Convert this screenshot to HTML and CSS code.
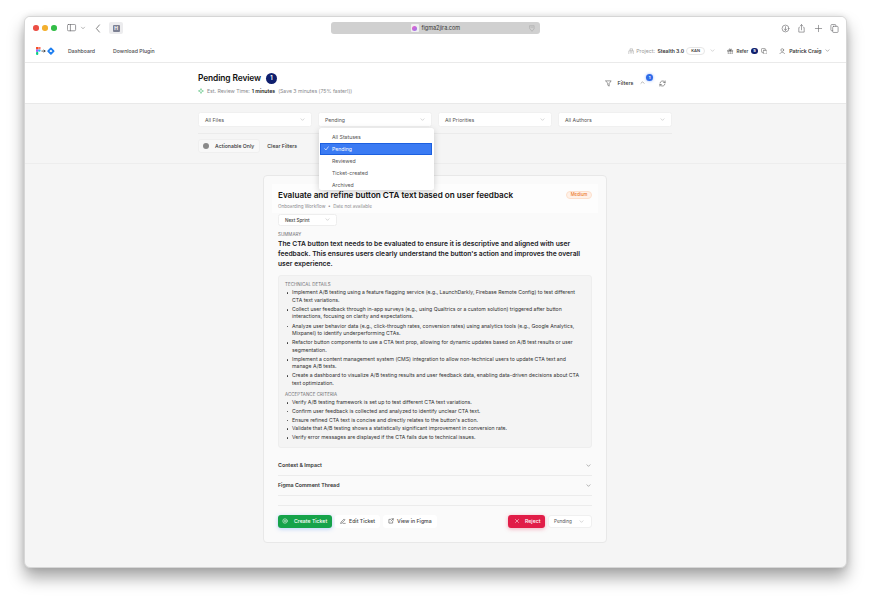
FILE: index.html
```html
<!DOCTYPE html>
<html lang="en">
<head>
<meta charset="utf-8">
<title>Pending Review</title>
<link rel="stylesheet" href="styles.css">
</head>
<body>
<div class="window">
  <div class="chrome">
    <div class="chrome-left">
      <span class="light red"></span><span class="light yellow"></span><span class="light green"></span>
      <svg class="ci sidebar-ic" viewBox="0 0 10 8"><rect x=".4" y=".4" width="8.2" height="6.4" rx="1.2"/><path d="M3.4.4v6.4"/></svg>
      <svg class="ci caret" viewBox="0 0 6 6"><path d="M1.5 2.2 3 3.8l1.5-1.6"/></svg>
      <svg class="ci back" viewBox="0 0 6 10"><path d="M4.6 1 1.2 5l3.4 4"/></svg>
      <span class="tab-ic"><span class="tab-h">H</span></span>
    </div>
    <div class="address">
      <span class="addr-center"><span class="favicon"><span class="fav-dot"></span></span><span>figma2jira.com</span></span>
      <svg class="ci shield" viewBox="0 0 8 10"><path d="M1 1h6v4.500L4 9 1 5.500zM2.500 3h3"/></svg>
    </div>
    <div class="chrome-right">
      <svg class="ci act" viewBox="0 0 10 10"><circle cx="5" cy="5" r="3.800"/><path d="M5 3v4M3.500 5.500 5 7l1.500-1.500"/></svg>
      <svg class="ci act" viewBox="0 0 10 10"><path d="M2.500 4H2v5h6V4h-.5M5 6.500V.8M3.400 2.300 5 .8l1.600 1.500"/></svg>
      <svg class="ci act" viewBox="0 0 10 10"><path d="M5 1.500v7M1.500 5h7"/></svg>
      <svg class="ci act" viewBox="0 0 10 10"><rect x="3" y="2.600" width="6" height="6.800" rx="1"/><path d="M3 7.500H2a1 1 0 0 1-1-1V1.600a1 1 0 0 1 1-1h3.500a1 1 0 0 1 1 1v1"/></svg>
    </div>
  </div>

  <nav class="nav">
    <div class="nav-left">
      <span class="logo">
        <svg viewBox="0 0 21 10" class="logo-svg">
          <rect x="0" y="0" width="2.500" height="2.700" fill="#f24e1e"/>
          <rect x="2.500" y="0" width="2.500" height="2.700" fill="#ff7262"/>
          <rect x="0" y="2.700" width="2.500" height="2.700" fill="#a259ff"/>
          <circle cx="3.700" cy="4" r="1.300" fill="#1abcfe"/>
          <rect x="0" y="5.400" width="2.500" height="3.600" rx="1.200" fill="#0acf83"/>
          <path d="M6.500 4.500h3.500M8.800 3.400l1.300 1.100-1.300 1.100" stroke="#222" stroke-width=".8" fill="none"/>
          <path d="M16.500 1.500 19.500 4.500 16.500 7.500 13.500 4.500z" fill="none" stroke="#1f7ff0" stroke-width="2"/>
        </svg>
      </span>
      <a class="nav-link">Dashboard</a>
      <a class="nav-link">Download Plugin</a>
    </div>
    <div class="nav-right">
      <svg class="ni" viewBox="0 0 8 8"><path d="M1 7.500V3.500h1.500V1h3v2.500H7v4zM3 3h2M3 4.500h2M3 6h2"/></svg>
      <span class="proj-label">Project:</span>
      <span class="proj-name">Stealth 3.0</span>
      <span class="kan">KAN</span>
      <svg class="chev pale" viewBox="0 0 8 5"><path d="M1.500 1.200 4 3.700l2.500-2.500"/></svg>
      <span class="refer">
        <svg class="ni dark" viewBox="0 0 8 8"><path d="M1 3h6v1H1zM1.500 4v3.500h5V4M4 3v4.500M4 3C2 3 2 1 3 1s1 2 1 2 0-2 1-2 1 2-1 2"/></svg>
        <span>Refer</span>
        <span class="refer-count">5</span>
        <svg class="ni dark" viewBox="0 0 8 8"><rect x="2.800" y="2.800" width="4.600" height="4.600" rx=".8"/><path d="M2.800 5.400H1.400a.8.800 0 0 1-.8-.8V1.400a.8.800 0 0 1 .8-.8h3.200a.8.800 0 0 1 .8.800v1.400"/></svg>
      </span>
      <span class="user">
        <svg class="ni dark" viewBox="0 0 8 8"><circle cx="4" cy="2.500" r="1.700"/><path d="M1 7.500c0-3 6-3 6 0z"/></svg>
        <span>Patrick Craig</span>
        <svg class="chev" viewBox="0 0 8 5"><path d="M1.500 1.200 4 3.700l2.500-2.500"/></svg>
      </span>
    </div>
  </nav>

  <header class="page-head">
    <div class="head-inner">
      <div>
        <div class="title-row"><h1>Pending Review</h1><span class="count">1</span></div>
        <div class="est">
          <svg class="spark" viewBox="0 0 8 8"><path d="M4 .5v2.200M4 5.300v2.200M.5 4h2.200M5.300 4h2.200M2.700 2.700 4 1.500l1.300 1.200 1.200 1.300-1.200 1.300L4 6.500 2.700 5.300 1.500 4z"/></svg>
          <span>Est. Review Time:</span><b>1 minutes</b><span class="save">(Save 3 minutes (75% faster!))</span>
        </div>
      </div>
      <div class="head-actions">
        <svg class="hi" viewBox="0 0 8 8"><path d="M1 1h6L4.800 4v3L3.200 6V4z"/></svg>
        <span class="filters-label">Filters</span>
        <span class="filters-caret">
          <svg class="chev up" viewBox="0 0 8 5"><path d="M1.500 3.700 4 1.200l2.500 2.500"/></svg>
          <span class="blue-badge">1</span>
        </span>
        <svg class="hi refresh" viewBox="0 0 8 8"><path d="M1.200 3.500A2.900 2.900 0 0 1 6.200 2l.8.800M6.800 4.500A2.900 2.900 0 0 1 1.800 6L1 5.200M7 1v1.800H5.200M1 7V5.200h1.800"/></svg>
      </div>
    </div>
  </header>

  <main class="main">
    <section class="filter-band">
      <div class="filters">
        <div class="select">All Files<svg class="chev pale" viewBox="0 0 8 5"><path d="M1.500 1.200 4 3.700l2.500-2.500"/></svg></div>
        <div class="select status">Pending<svg class="chev pale" viewBox="0 0 8 5"><path d="M1.500 1.200 4 3.700l2.500-2.500"/></svg>
          <ul class="menu">
            <li>All Statuses</li>
            <li class="selected"><svg class="check" viewBox="0 0 6 6"><path d="M.8 3.200 2.300 4.800 5.200 1"/></svg>Pending</li>
            <li>Reviewed</li>
            <li>Ticket-created</li>
            <li>Archived</li>
          </ul>
        </div>
        <div class="select">All Priorities<svg class="chev pale" viewBox="0 0 8 5"><path d="M1.500 1.200 4 3.700l2.500-2.500"/></svg></div>
        <div class="select">All Authors<svg class="chev pale" viewBox="0 0 8 5"><path d="M1.500 1.200 4 3.700l2.500-2.500"/></svg></div>
      </div>
      <div class="filter-tools">
        <span class="toggle"><span class="toggle-dot"></span>Actionable Only</span>
        <span class="clear">Clear Filters</span>
      </div>
    </section>

    <article class="card">
      <div class="card-head">
        <div>
          <h2>Evaluate and refine button CTA text based on user feedback</h2>
          <p class="meta">Onboarding Workflow &nbsp;•&nbsp; Date not available</p>
        </div>
        <span class="priority">Medium</span>
      </div>
      <div class="sprint">Next Sprint<svg class="chev pale" viewBox="0 0 8 5"><path d="M1.500 1.200 4 3.700l2.500-2.500"/></svg></div>
      <h3 class="label">SUMMARY</h3>
      <p class="summary">The CTA button text needs to be evaluated to ensure it is descriptive and aligned with user feedback. This ensures users clearly understand the button's action and improves the overall user experience.</p>
      <div class="details">
        <h3 class="label">TECHNICAL DETAILS</h3>
        <ul class="bullets">
          <li>Implement A/B testing using a feature flagging service (e.g., LaunchDarkly, Firebase Remote Config) to test different CTA text variations.</li>
          <li>Collect user feedback through in-app surveys (e.g., using Qualtrics or a custom solution) triggered after button interactions, focusing on clarity and expectations.</li>
          <li>Analyze user behavior data (e.g., click-through rates, conversion rates) using analytics tools (e.g., Google Analytics, Mixpanel) to identify underperforming CTAs.</li>
          <li>Refactor button components to use a CTA text prop, allowing for dynamic updates based on A/B test results or user segmentation.</li>
          <li>Implement a content management system (CMS) integration to allow non-technical users to update CTA text and manage A/B tests.</li>
          <li>Create a dashboard to visualize A/B testing results and user feedback data, enabling data-driven decisions about CTA text optimization.</li>
        </ul>
        <h3 class="label second">ACCEPTANCE CRITERIA</h3>
        <ul class="bullets criteria">
          <li>Verify A/B testing framework is set up to test different CTA text variations.</li>
          <li>Confirm user feedback is collected and analyzed to identify unclear CTA text.</li>
          <li>Ensure refined CTA text is concise and directly relates to the button's action.</li>
          <li>Validate that A/B testing shows a statistically significant improvement in conversion rate.</li>
          <li>Verify error messages are displayed if the CTA fails due to technical issues.</li>
        </ul>
      </div>
      <div class="accordion">Context &amp; Impact<svg class="chev" viewBox="0 0 8 5"><path d="M1.500 1.200 4 3.700l2.500-2.500"/></svg></div>
      <div class="accordion">Figma Comment Thread<svg class="chev" viewBox="0 0 8 5"><path d="M1.500 1.200 4 3.700l2.500-2.500"/></svg></div>
      <div class="actions">
        <div class="actions-left">
          <button class="btn create"><svg class="bi" viewBox="0 0 8 8"><circle cx="4" cy="4" r="3"/><path d="M2.800 4h2.400M4 2.800v2.400"/></svg>Create Ticket</button>
          <button class="btn plain"><svg class="bi" viewBox="0 0 8 8"><path d="M1 7l.4-1.600L5.500 1.300l1.200 1.200L2.600 6.600zM4 7.200h3"/></svg>Edit Ticket</button>
          <button class="btn plain"><svg class="bi" viewBox="0 0 8 8"><path d="M3.500 1.800H1.200v5h5V4.500M4 4l3-3M5 1h2v2"/></svg>View in Figma</button>
        </div>
        <div class="actions-right">
          <button class="btn reject"><svg class="bi" viewBox="0 0 8 8"><path d="M2 2l4 4M6 2 2 6"/></svg>Reject</button>
          <div class="status-select">Pending<svg class="chev pale" viewBox="0 0 8 5"><path d="M1.500 1.200 4 3.700l2.500 -2.500"/></svg></div>
        </div>
      </div>
    </article>
  </main>
</div>
</body>
</html>
```

FILE: styles.css
```css
* { box-sizing: border-box; }
html, body { margin: 0; height: 100%; }
body {
  background: #fff;
  padding: 16px 24px 32px 24px;
  font-family: Inter, "Liberation Sans", sans-serif;
  color: #1c1c1f;
  overflow: hidden;
}
h1, h2, h3, p, ul { margin: 0; padding: 0; }
svg { display: block; flex: none; fill: none; stroke-linecap: round; stroke-linejoin: round; }

.window {
  height: 552px;
  background: #f5f5f5;
  border: 1px solid #d6d6d6;
  border-radius: 6px;
  overflow: hidden;
  box-shadow: 0 10px 16px rgba(0,0,0,.34), 0 0 6px rgba(0,0,0,.12);
  display: flex;
  flex-direction: column;
}

.chrome {
  flex: none;
  height: 23px;
  background: #fff;
  display: flex;
  align-items: center;
  padding: 0 7px 1px 8px;
  position: relative;
  justify-content: space-between;
}
.chrome-left, .chrome-right { display: flex; align-items: center; }
.light { width: 5.5px; height: 5.5px; border-radius: 50%; margin-right: 3.500px; }
.red { background: #ec4f45; }
.yellow { background: #f3b02f; }
.green { background: #33bd47; }
.ci { stroke: #6c6c70; stroke-width: .7; }
.sidebar-ic { width: 10px; height: 8px; margin-left: 7px; }
.caret { width: 6px; height: 6px; margin-left: 3px; stroke: #9a9a9a; }
.back { width: 6px; height: 9px; margin-left: 9px; stroke: #555; stroke-width: .8; }
.tab-ic { width: 14px; height: 12px; margin-left: 8px; background: #ececee; border-radius: 2px; display: flex; align-items: center; justify-content: center; }
.tab-h { width: 7px; height: 7px; background: #7d8193; border-radius: 1px; color: #fff; font-size: 5px; font-weight: 700; line-height: 7px; text-align: center; }
.address {
  position: absolute;
  left: 306px;
  top: 5px;
  width: 209px;
  height: 12px;
  background: #d0d0d0;
  border-radius: 3px;
  display: flex;
  align-items: center;
  justify-content: center;
  font-size: 5.500px;
  color: #333;
}
.addr-center { display: flex; align-items: center; gap: 2.500px; }
.favicon { width: 8px; height: 8px; background: #f0f0f0; border-radius: 1px; display: flex; align-items: center; justify-content: center; }
.fav-dot { width: 5px; height: 5px; border-radius: 50%; background: linear-gradient(135deg, #f25ec4, #8f7bf2); }
.shield { position: absolute; right: 5px; top: 3px; width: 6px; height: 7px; stroke: #a2a2a2; }
.chrome-right { gap: 7.500px; }
.act { width: 9px; height: 9px; }

.nav {
  flex: none;
  height: 23px;
  background: #fff;
  border-bottom: 1px solid #eaeaea;
  display: flex;
  align-items: center;
  justify-content: space-between;
  padding: 0 16px 0 11px;
  font-size: 5.200px;
  color: #4a4a4e;
}
.nav-left { display: flex; align-items: center; }
.logo-svg { width: 19px; height: 9px; }
.nav-link { margin-left: 13px; font-weight: 500; }
.nav-link + .nav-link { margin-left: 18px; }
.nav-right { display: flex; align-items: center; }
.ni { width: 6.500px; height: 6.500px; stroke: #9a9a9a; stroke-width: .6; }
.ni.dark { stroke: #555; }
.proj-label { margin-left: 2px; color: #999; }
.proj-name { margin-left: 2.500px; color: #333; font-weight: 600; font-size: 5.100px; }
.kan { margin-left: 2px; width: 19px; height: 8px; border: 1px solid #e6e6e6; border-radius: 4px; font-size: 4px; font-weight: 600; line-height: 6px; text-align: center; color: #333; }
.chev { width: 5px; height: 3.200px; stroke: #555; stroke-width: .7; }
.chev.pale { stroke: #a5a5a5; }
.nav-right > .chev { margin-left: 5px; }
.refer { display: flex; align-items: center; margin-left: 12px; font-size: 4.500px; font-weight: 600; color: #444; gap: 3px; }
.refer-count { width: 6.500px; height: 6.500px; border-radius: 50%; background: #0f1f6e; color: #fff; font-size: 4px; line-height: 6.500px; text-align: center; font-weight: 700; }
.user { display: flex; align-items: center; gap: 3.500px; margin-left: 12px; font-weight: 600; color: #333; }

.page-head {
  flex: none;
  height: 41px;
  background: #fff;
  border-bottom: 1px solid #e9e9e9;
  display: flex;
  justify-content: center;
  padding-right: 1px;
}
.head-inner { width: 474px; display: flex; justify-content: space-between; padding-top: 9px; }
.title-row { display: flex; align-items: center; gap: 5px; height: 12px; }
h1 { font-size: 8.400px; font-weight: 600; color: #111; line-height: 12px; letter-spacing: -.1px; }
.count { width: 11px; height: 11px; border-radius: 50%; background: #0f1f6e; color: #fff; font-size: 5.500px; font-weight: 700; line-height: 11px; text-align: center; }
.est { display: flex; align-items: center; margin-top: 4px; font-size: 5.150px; color: #8a8a8e; height: 6px; }
.spark { width: 6px; height: 6px; margin-right: 3px; stroke: #55c27c; stroke-width: .7; }
.est b { margin-left: 2px; color: #222; font-weight: 600; }
.save { margin-left: 3px; }
.head-actions { display: flex; align-items: center; height: 22px; padding-right: 6px; }
.hi { width: 7px; height: 7px; stroke: #444; stroke-width: .6; }
.filters-label { margin-left: 5.500px; font-size: 5.400px; font-weight: 500; color: #333; }
.filters-caret { position: relative; margin-left: 6.500px; }
.up { stroke: #555; }
.blue-badge {
  position: absolute;
  left: 6px;
  top: -7px;
  width: 7px;
  height: 7px;
  background: #2f6be8;
  border-radius: 50%;
  color: #fff;
  font-size: 4px;
  line-height: 7px;
  text-align: center;
  font-weight: 700;
  box-shadow: 0 0 3px rgba(60,120,255,.55);
}
.refresh { margin-left: 14px; }

.main { flex: 1; display: flex; flex-direction: column; align-items: center; min-height: 0; padding-right: 1px; }
.filter-band { align-self: stretch; margin-right: -1px; padding-right: 1px; display: flex; flex-direction: column; align-items: center; padding-top: 8px; height: 60px; border-bottom: 1px solid #ededed; }
.filters { width: 474px; display: flex; gap: 6px; padding-bottom: 6px; border-bottom: 1px solid #ebebeb; }
.select {
  position: relative;
  flex: 1;
  height: 15px;
  background: #fff;
  border-radius: 2.500px;
  border: 1px solid #f0f0f0;
  display: flex;
  align-items: center;
  justify-content: space-between;
  padding: 0 6px;
  font-size: 5.200px;
  color: #555;
}
.menu {
  position: absolute;
  left: 0;
  top: 15px;
  width: 115px;
  height: 62px;
  background: #fff;
  border-radius: 2.500px;
  list-style: none;
  padding: 2.500px 1px;
  box-shadow: 0 2px 7px rgba(0,0,0,.18);
  z-index: 5;
}
.menu li { height: 12px; line-height: 12px; padding-left: 12px; font-size: 5.200px; color: #555; position: relative; }
.menu li.selected { background: #3b7bf3; color: #fff; border: 1px solid #1c60e0; line-height: 10px; padding-left: 11px; margin-right: 1px; }
.check { position: absolute; left: 3px; top: 2.500px; width: 5px; height: 5px; stroke: #fff; stroke-width: .8; }
.filter-tools { width: 474px; display: flex; align-items: center; margin-top: 5px; font-size: 5.200px; font-weight: 500; color: #333; }
.toggle { height: 14px; border: 1px solid #efefef; border-radius: 3px; background: #f8f8f8; display: flex; align-items: center; padding: 0 5px 0 4px; gap: 6px; }
.toggle-dot { width: 6px; height: 6px; border-radius: 50%; background: #8a8a8a; }
.clear { margin-left: 7px; }

.card {
  width: 344px;
  height: 368px;
  margin-top: 11px;
  background: #fafafa;
  border: 1px solid #e8e8e8;
  border-radius: 4px;
  padding: 8px 14px 0;
  flex: none;
}
.card-head {
  margin: 0 -6px;
  height: 29px;
  padding: 5px 6px 0;
  background: #fdfdfd;
  display: flex;
  justify-content: space-between;
  align-items: flex-start;
}
h2 { font-size: 8.130px; line-height: 12px; font-weight: 600; color: #111; }
.meta { margin-top: 3px; font-size: 4.600px; line-height: 6px; color: #8a8a8e; }
.priority { margin-top: 1.500px; width: 26px; height: 8px; border-radius: 4px; border: 1px solid #fde0cc; background: #fff1e8; color: #ec7a2c; font-size: 4.300px; line-height: 6px; text-align: center; font-weight: 500; }
.sprint {
  width: 59px;
  height: 12px;
  background: #fff;
  border: 1px solid #eeeeee;
  border-radius: 2.500px;
  display: flex;
  align-items: center;
  justify-content: space-between;
  padding: 0 6px;
  font-size: 4.600px;
  font-weight: 500;
  color: #444;
  margin-top: 1px;
}
.label { font-size: 4.400px; line-height: 6px; font-weight: 400; color: #6e6e72; letter-spacing: .1px; }
.sprint + .label { margin-top: 6px; }
.summary { font-size: 6.720px; line-height: 10.200px; font-weight: 600; color: #202024; margin-top: 1px; }
.details {
  margin-top: 5px;
  background: #f4f4f4;
  border: 1px solid #eeeeee;
  border-radius: 3px;
  padding: 6px 6px 0;
  height: 173px;
}
.bullets { list-style: none; font-size: 5.170px; line-height: 7.400px; color: #333; }
.bullets li { position: relative; padding-left: 7px; margin-top: 1.800px; }
.bullets li::before { content: ""; position: absolute; left: 1.500px; top: 3px; width: 1.800px; height: 1.800px; border-radius: 50%; background: #333; }
.label.second { margin-top: 5px; }
.criteria li { margin-top: 1.500px; }
.criteria li:first-child { margin-top: .5px; }
.accordion {
  height: 20px;
  border-bottom: 1px solid #ececec;
  display: flex;
  align-items: center;
  justify-content: space-between;
  font-size: 5.300px;
  font-weight: 600;
  color: #333;
  padding-right: 1px;
}
.details + .accordion { margin-top: 8px; }
.actions {
  border-top: 1px solid #ececec;
  margin-top: 9px;
  padding-top: 9px;
  display: flex;
  justify-content: space-between;
  align-items: center;
}
.actions-left, .actions-right { display: flex; gap: 3px; align-items: center; }
.btn {
  height: 13px;
  border: 0;
  border-radius: 3px;
  display: flex;
  align-items: center;
  font-family: inherit;
  font-size: 5.200px;
  font-weight: 500;
  padding: 0 5px;
  gap: 5px;
}
.bi { width: 6px; height: 6px; stroke: currentColor; stroke-width: .7; }
.create { background: #16a34a; color: #fff; width: 54px; padding: 0 4px; gap: 6px; box-shadow: 0 1px 4px rgba(59,130,246,.35); }
.plain { background: #fff; color: #444; gap: 3px; }
.reject { background: #e11d48; color: #fff; width: 37px; padding: 0 6px; gap: 5px; box-shadow: 0 1px 4px rgba(225,29,72,.35); }
.status-select {
  width: 44px;
  height: 13px;
  background: #fff;
  border: 1px solid #f0f0f0;
  border-radius: 3px;
  display: flex;
  align-items: center;
  justify-content: space-between;
  padding: 0 7px 0 5px;
  font-size: 4.600px;
  color: #555;
}
```
